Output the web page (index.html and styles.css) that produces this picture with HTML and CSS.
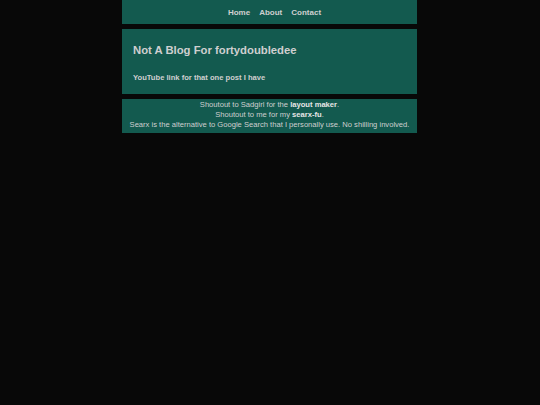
FILE: index.html
```html
<!DOCTYPE html>
<html>
<head>
<meta charset="utf-8">
<link rel="stylesheet" href="styles.css">
</head>
<body>
<div class="page">
  <nav class="nav">
    <a href="#">Home</a>
    <a href="#">About</a>
    <a href="#">Contact</a>
  </nav>
  <main class="main">
    <h1 class="title">Not A Blog For fortydoubledee</h1>
    <p class="post"><a href="#">YouTube link for that one post I have</a></p>
  </main>
  <footer class="foot">
    <div>Shoutout to Sadgirl for the <b>layout maker</b>.</div>
    <div>Shoutout to me for my <b>searx-fu</b>.</div>
    <div>Searx is the alternative to Google Search that I personally use. No shilling involved.</div>
  </footer>
</div>
</body>
</html>
```
FILE: styles.css
```css
html, body { margin: 0; padding: 0; background: #080808; }
body { font-family: "Liberation Sans", Arial, sans-serif; color: #cfcfcf; }
.page { width: 295px; margin-left: 122px; display: flex; flex-direction: column; gap: 5px; }
.nav, .main, .foot { background: #135a4f; }
.nav { height: 24px; display: flex; justify-content: center; align-items: center; gap: 9px; font-size: 8px; font-weight: bold; padding-left: 10px; box-sizing: border-box; }
.nav a { color: #cfcfcf; text-decoration: none; }
.main { height: 65px; padding: 0 11px; box-sizing: border-box; }
.title { margin: 0; padding-top: 13px; font-size: 11.3px; line-height: 16px; font-weight: bold; }
.post { margin: 15px 0 0; font-size: 7.6px; line-height: 10px; font-weight: bold; }
.post a { color: #cfcfcf; text-decoration: none; }
.foot { text-align: center; font-size: 7.6px; line-height: 10px; padding: 1px 0 3px; }
.foot b { color: #e6e6e6; }
```
